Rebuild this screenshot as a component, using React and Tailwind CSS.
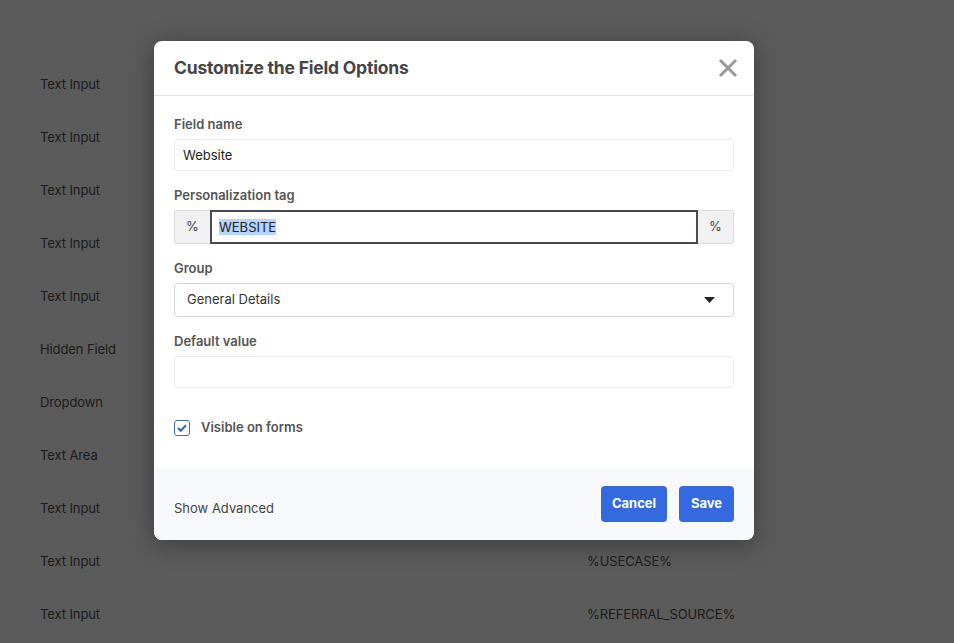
import { useState } from "react";

const ROWS = [
  { type: "Text Input" },
  { type: "Text Input" },
  { type: "Text Input" },
  { type: "Text Input" },
  { type: "Text Input" },
  { type: "Hidden Field" },
  { type: "Dropdown" },
  { type: "Text Area" },
  { type: "Text Input" },
  { type: "Text Input", tag: "%USECASE%" },
  { type: "Text Input", tag: "%REFERRAL_SOURCE%" },
];

const font = { fontFamily: "Inter, 'Noto Sans', sans-serif" };
const labelCls = "block text-[13px] font-semibold text-[#555] leading-[18px] mb-[6px]";

export default function App() {
  const [name, setName] = useState("Website");
  const [tag, setTag] = useState("WEBSITE");
  const [visible, setVisible] = useState(true);

  return (
    <div className="relative min-h-[643px] bg-[#5b5b5b] overflow-hidden" style={font}>
      {/* page behind the overlay */}
      <div className="pt-[58px]">
        {ROWS.map((r, i) => (
          <div key={i} className="flex items-center h-[53px] text-[13px] text-[#1c1c1c] tracking-[-0.1px]">
            <span className="pl-[40px] w-[587px]">{r.type}</span>
            {r.tag && <span>{r.tag}</span>}
          </div>
        ))}
      </div>

      {/* modal */}
      <div className="absolute left-[154px] top-[41px] w-[600px] bg-white rounded-[8px] shadow-[0_4px_24px_rgba(0,0,0,0.35)] overflow-hidden">
        <div className="flex items-center justify-between h-[55px] px-5 border-b border-[#e3e3e3]">
          <h2 className="text-[17.5px] font-bold text-[#454545] tracking-[-0.2px]">Customize the Field Options</h2>
          <button className="text-[#9a9a9a] -mr-[4px]">
            <svg width="20" height="20" viewBox="0 0 20 20" fill="none" stroke="currentColor" strokeWidth="3" strokeLinecap="square">
              <path d="M3 3l14 14M17 3L3 17" />
            </svg>
          </button>
        </div>

        <div className="px-5 pt-[19px]">
          <label className={labelCls}>Field name</label>
          <input
            value={name}
            onChange={(e) => setName(e.target.value)}
            className="w-full h-[32px] px-2 text-[13px] text-[#222] border border-[#ececec] rounded-[3px] outline-none"
          />

          <label className={`${labelCls} mt-[15px]`}>Personalization tag</label>
          <div className="flex h-[34px]">
            <span className="w-[36px] flex items-center justify-center bg-[#f1f1f1] border border-[#dcdcdc] border-r-0 rounded-l-[3px] text-[13px] text-[#444]">%</span>
            <div className="flex-1 flex items-center border-2 border-[#4a4a55] px-[7px] text-[13px] text-[#222]">
              <span className="bg-[#b4d5fe] leading-[16px]">{tag}</span>
            </div>
            <span className="w-[36px] flex items-center justify-center bg-[#f1f1f1] border border-[#dcdcdc] border-l-0 rounded-r-[3px] text-[13px] text-[#444]">%</span>
          </div>

          <label className={`${labelCls} mt-[15px]`}>Group</label>
          <div className="flex items-center justify-between h-[34px] px-3 border border-[#d6d6d6] rounded-[4px] text-[13px] text-[#333]">
            <span>General Details</span>
            <svg width="11" height="6" viewBox="0 0 11 6" className="mr-[6px]">
              <path d="M0 0h11L5.5 6z" fill="#222" />
            </svg>
          </div>

          <label className={`${labelCls} mt-[15px]`}>Default value</label>
          <input className="w-full h-[32px] px-2 text-[13px] border border-[#ececec] rounded-[3px] outline-none" />

          <label className="flex items-center gap-[11px] mt-[30px] mb-[30px] cursor-pointer" onClick={() => setVisible(!visible)}>
            <span className="w-[16px] h-[16px] rounded-[3px] border border-[#3d6db4] bg-white flex items-center justify-center">
              {visible && (
                <svg width="10" height="8" viewBox="0 0 10 8" fill="none" stroke="#2d64bd" strokeWidth="2">
                  <path d="M1 4l2.8 2.8L9 1.2" />
                </svg>
              )}
            </span>
            <span className="text-[13px] font-semibold text-[#555]">Visible on forms</span>
          </label>
        </div>

        <div className="flex items-center justify-between h-[72px] px-5 bg-[#f7f9fd]">
          <span className="text-[13px] text-[#444] pt-[10px]">Show Advanced</span>
          <div className="flex gap-3">
            <button className="h-[36px] w-[66px] rounded-[4px] bg-[#3469e0] text-white text-[13px] font-bold">Cancel</button>
            <button className="h-[36px] w-[55px] rounded-[4px] bg-[#3469e0] text-white text-[13px] font-bold">Save</button>
          </div>
        </div>
      </div>
    </div>
  );
}
